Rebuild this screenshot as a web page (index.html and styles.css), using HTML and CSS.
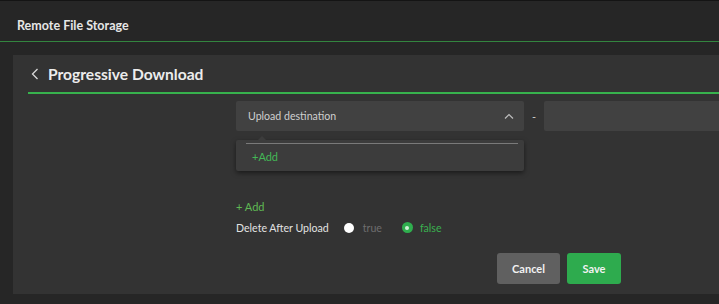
FILE: index.html
```html
<!DOCTYPE html>
<html>
<head>
<meta charset="utf-8">
<link rel="stylesheet" href="styles.css">
</head>
<body>
<div class="app">
  <div class="topbar">Remote File Storage</div>
  <div class="main">
    <div class="panel">
      <div class="panel-head">
        <svg class="back" width="8" height="12" viewBox="0 0 8 12"><path d="M6.5 1 L1.5 6 L6.5 11" fill="none" stroke="#d8d8d8" stroke-width="1.3"/></svg>
        <span class="panel-title">Progressive Download</span>
      </div>
      <div class="content">
        <div class="row">
          <div class="select">
            <span>Upload destination</span>
            <svg class="chev" width="10" height="6" viewBox="0 0 10 6"><path d="M1 5.5 L5 1.5 L9 5.5" fill="none" stroke="#bdbdbd" stroke-width="1.2"/></svg>
          </div>
          <span class="dash">-</span>
          <div class="input"></div>
        </div>
        <div class="dropdown">
          <div class="dd-line"></div>
          <div class="dd-add">+Add</div>
        </div>
        <div class="add">+ Add</div>
        <div class="option">
          <span class="label">Delete After Upload</span>
          <span class="radio white"></span>
          <span class="rtext off">true</span>
          <span class="radio on"></span>
          <span class="rtext onc">false</span>
        </div>
        <div class="actions">
          <button class="btn cancel">Cancel</button>
          <button class="btn save">Save</button>
        </div>
      </div>
    </div>
  </div>
</div>
</body>
</html>
```
FILE: styles.css
```css
html, body {
  margin: 0;
  padding: 0;
  background: #272727;
  font-family: "Lato", "Open Sans", sans-serif;
}
.app {
  width: 719px;
  height: 304px;
  background: #262626;
  overflow: hidden;
  border-top: 1px solid #141414;
  box-sizing: border-box;
}
.topbar {
  height: 41px;
  box-sizing: border-box;
  padding: 17px 0 0 17px;
  font-size: 12.5px;
  font-weight: 700;
  color: #e6e6e6;
  border-bottom: 1px solid #33853f;
}
.main {
  padding: 13px 0 0 13px;
}
.panel {
  background: #333333;
  height: 239px;
  display: flex;
  flex-direction: column;
}
.panel-head {
  height: 37px;
  margin-left: 15px;
  border-bottom: 2px solid #37b24d;
  display: flex;
  align-items: center;
}
.back {
  margin-left: 3px;
  margin-right: 9px;
}
.panel-title {
  font-size: 15.6px;
  font-weight: 700;
  color: #ececec;
}
.content {
  padding-left: 223px;
  padding-top: 7px;
  display: flex;
  flex-direction: column;
}
.row {
  display: flex;
  align-items: center;
  height: 30px;
}
.select {
  width: 288px;
  height: 30px;
  box-sizing: border-box;
  background: #414141;
  border-radius: 2px;
  display: flex;
  align-items: center;
  justify-content: space-between;
  padding: 0 10px 0 12px;
  font-size: 10.6px;
  color: #cfcfcf;
}
.chev { margin-bottom: 1px; }
.dash {
  width: 20px;
  text-align: center;
  color: #cfcfcf;
  font-size: 11px;
}
.input {
  flex: 1;
  height: 30px;
  background: #414141;
  border-radius: 2px 0 0 2px;
}
.dropdown {
  position: relative;
  margin-top: 9px;
  width: 288px;
  height: 31px;
  box-sizing: border-box;
  background: #3c3c3c;
  border-radius: 2px;
  box-shadow: 0 2px 5px rgba(0,0,0,0.5);
  padding: 3px 6px 0 10px;
}
.dropdown::before {
  content: "";
  position: absolute;
  left: 22px;
  top: -4px;
  border-left: 4px solid transparent;
  border-right: 4px solid transparent;
  border-bottom: 4px solid #3c3c3c;
}
.dd-line {
  height: 1px;
  background: #7a7a7a;
}
.dd-add {
  margin: 6px 0 0 6px;
  font-size: 11px;
  color: #43b856;
}
.add {
  margin-top: 29px;
  font-size: 11px;
  color: #5fb954;
  height: 15px;
}
.option {
  margin-top: 5px;
  display: flex;
  align-items: center;
  height: 15px;
  font-size: 10.6px;
}
.label { color: #e2e2e2; margin-right: 15px; }
.radio {
  width: 10px;
  height: 10px;
  border-radius: 50%;
  box-sizing: border-box;
}
.radio.white { background: #ffffff; margin-right: 9px; }
.radio.on {
  background: #2fae4e;
  width: 11px;
  height: 11px;
  margin-left: 20px;
  margin-right: 7px;
  display: flex;
  align-items: center;
  justify-content: center;
}
.radio.on::after {
  content: "";
  width: 4px;
  height: 4px;
  border-radius: 50%;
  background: #d0f0d6;
}
.rtext.off { color: #6e6e6e; }
.rtext.onc { color: #3ab04f; }
.actions {
  margin-top: 18px;
  margin-left: 261px;
  display: flex;
  gap: 7px;
}
.btn {
  height: 31px;
  border: none;
  border-radius: 3px;
  font-family: "Lato", "Open Sans", sans-serif;
  font-size: 11px;
  font-weight: 700;
  color: #f2f2f2;
  padding: 0;
}
.cancel { width: 63px; background: #606060; }
.save { width: 54px; background: #2eab4e; }
```
